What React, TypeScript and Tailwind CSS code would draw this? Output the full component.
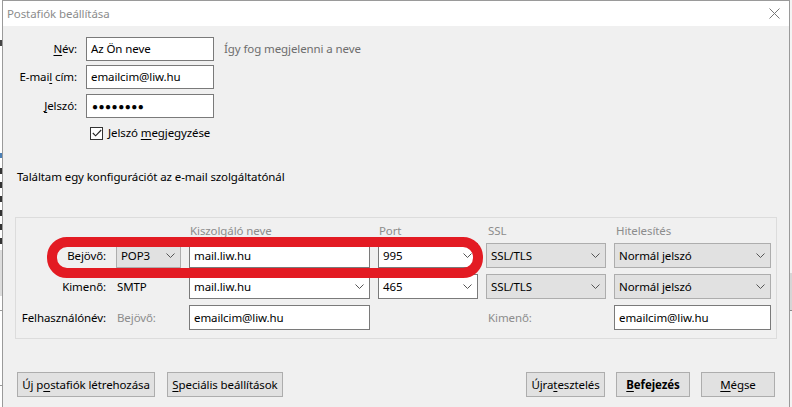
import React from 'react';

const font = "font-['Noto_Sans','Liberation_Sans',sans-serif]";

function Chevron() {
  return (
    <svg width="9" height="5" viewBox="0 0 9 5" className="shrink-0">
      <path d="M0.5 0.5 L4.5 4.5 L8.5 0.5" fill="none" stroke="#555" strokeWidth="1" />
    </svg>
  );
}

function TextBox({ value, className = '' }: { value: string; className?: string }) {
  return (
    <div className={`h-[25px] bg-white border border-[#7a7a7a] flex items-center pl-[4px] text-black ${className}`}>
      {value}
    </div>
  );
}

function EditCombo({ value }: { value: string }) {
  return (
    <div className="h-[25px] bg-white border border-[#7a7a7a] flex items-center justify-between pl-[4px] pr-[5px] text-black">
      <span>{value}</span>
      <Chevron />
    </div>
  );
}

function DropList({ value }: { value: string }) {
  return (
    <div className="h-[25px] bg-[#e1e1e1] border border-[#adadad] flex items-center justify-between pl-[4px] pr-[5px] text-black">
      <span>{value}</span>
      <Chevron />
    </div>
  );
}

function Button({ children, className = '' }: { children: React.ReactNode; className?: string }) {
  return (
    <div className={`h-[25px] bg-[#e1e1e1] border border-[#adadad] flex items-center justify-center text-black ${className}`}>
      {children}
    </div>
  );
}

export default function App() {
  return (
    <div className={`relative w-[792px] h-[407px] bg-white flex overflow-hidden text-[11.5px] tracking-[-0.1px] leading-[16px] ${font}`}>
      {/* background window fragments on the left */}
      <div className="relative w-[2px] h-full bg-white">
        <div className="absolute left-0 top-[40px] w-[2px] h-[6px] bg-[#444]" />
        <div className="absolute left-0 top-[153px] w-[2px] h-[5px] bg-[#4a7fb5]" />
        <div className="absolute left-0 top-[168px] w-[2px] h-[6px] bg-[#333]" />
        <div className="absolute left-0 top-[182px] w-[2px] h-[6px] bg-[#333]" />
        <div className="absolute left-0 top-[196px] w-[2px] h-[6px] bg-[#333]" />
        <div className="absolute left-0 top-[210px] w-[2px] h-[6px] bg-[#333]" />
        <div className="absolute left-0 top-[224px] w-[2px] h-[6px] bg-[#333]" />
        <div className="absolute left-0 top-[238px] w-[2px] h-[6px] bg-[#333]" />
        <div className="absolute left-0 top-[250px] w-[2px] h-[46px] bg-[#dcdcdc]" />
        <div className="absolute left-0 top-[310px] w-[2px] h-[1px] bg-[#999]" />
        <div className="absolute left-0 top-[385px] w-[2px] h-[1px] bg-[#999]" />
      </div>

      {/* dialog window */}
      <div className="w-[788px] h-full flex flex-col border-x border-t border-[#9a9a9a]">
        <div className="h-[25px] bg-white flex items-center justify-between pl-[4px] pr-[9px] shrink-0">
          <span className="text-[#8c8c8c]">Postafiók beállítása</span>
          <svg width="11" height="11" viewBox="0 0 11 11">
            <path d="M0.5 0.5 L10.5 10.5 M10.5 0.5 L0.5 10.5" stroke="#777" strokeWidth="1" />
          </svg>
        </div>

        <div className="flex-1 bg-[#f0f0f0] flex flex-col">
          {/* account fields */}
          <div className="pt-[11px] flex flex-col">
            <div className="flex items-center h-[24px]">
              <div className="w-[74px] text-right text-black"><u className="underline-offset-2">N</u>év:</div>
              <div className="ml-[9px] w-[128px] h-[24px] bg-white border border-[#7a7a7a] flex items-center pl-[4px]">Az Ön neve</div>
              <div className="ml-[10px] text-[#6d6d6d]">Így fog megjelenni a neve</div>
            </div>
            <div className="flex items-center h-[24px] mt-[4px]">
              <div className="w-[74px] text-right text-black">E-mai<u className="underline-offset-2">l</u> cím:</div>
              <div className="ml-[9px] w-[128px] h-[24px] bg-white border border-[#7a7a7a] flex items-center pl-[4px]">emailcim@liw.hu</div>
            </div>
            <div className="flex items-center h-[24px] mt-[5px]">
              <div className="w-[74px] text-right text-black"><u className="underline-offset-2">J</u>elszó:</div>
              <div className="ml-[9px] w-[128px] h-[24px] bg-white border border-[#7a7a7a] flex items-center pl-[5px] text-[10px] tracking-[0.5px]">●●●●●●●●</div>
            </div>
            <div className="flex items-center h-[16px] mt-[7px] ml-[87px]">
              <div className="w-[13px] h-[13px] border border-[#333] bg-white flex items-center justify-center">
                <svg width="10" height="8" viewBox="0 0 10 8">
                  <path d="M0.8 4 L3.6 6.8 L9.2 1" fill="none" stroke="#222" strokeWidth="1.1" />
                </svg>
              </div>
              <span className="ml-[5px] text-black">Jelszó <u className="underline-offset-2">m</u>egjegyzése</span>
            </div>
          </div>

          <div className="mt-[28px] ml-[14px] text-black">Találtam egy konfigurációt az e-mail szolgáltatónál</div>

          {/* server settings group */}
          <div className="mt-[32px] mx-[12px] h-[122px] border border-[#dcdcdc] flex flex-col">
            <div className="grid grid-cols-[92px_65px_181px_100px_120px_157px] gap-x-[8px] gap-y-[6px] items-center">
              <div className="h-[25px]" />
              <div />
              <div className="pl-[1px] text-[#8c8c8c]">Kiszolgáló neve</div>
              <div className="pl-[1px] text-[#8c8c8c]">Port</div>
              <div className="pl-[2px] text-[#8c8c8c]">SSL</div>
              <div className="pl-[2px] text-[#8c8c8c]">Hitelesítés</div>

              <div className="text-right pr-[2px] text-black -mt-[6px]">Bejövő:</div>
              <div className="-mt-[6px]"><DropList value="POP3" /></div>
              <div className="-mt-[6px]"><TextBox value="mail.liw.hu" /></div>
              <div className="-mt-[6px]"><EditCombo value="995" /></div>
              <div className="-mt-[6px]"><DropList value="SSL/TLS" /></div>
              <div className="-mt-[6px]"><DropList value="Normál jelszó" /></div>

              <div className="text-right pr-[2px] text-black">Kimenő:</div>
              <div className="pl-[1px] text-black">SMTP</div>
              <EditCombo value="mail.liw.hu" />
              <EditCombo value="465" />
              <DropList value="SSL/TLS" />
              <DropList value="Normál jelszó" />

              <div className="text-right pr-[2px] text-black">Felhasználónév:</div>
              <div className="pl-[1px] text-[#8c8c8c]">Bejövő:</div>
              <TextBox value="emailcim@liw.hu" />
              <div />
              <div className="pl-[2px] text-[#8c8c8c]">Kimenő:</div>
              <TextBox value="emailcim@liw.hu" />
            </div>
          </div>

          {/* bottom buttons */}
          <div className="mt-auto mb-[10px] px-[14px] flex justify-between">
            <div className="flex gap-[12px]">
              <Button className="w-[138px]">Új p<u className="underline-offset-2">o</u>stafiók létrehozása</Button>
              <Button className="w-[116px]"><u className="underline-offset-2">S</u>peciális beállítások</Button>
            </div>
            <div className="flex gap-[11px]">
              <Button className="w-[79px]">Újra<u className="underline-offset-2">t</u>esztelés</Button>
              <Button className="w-[74px] font-bold"><u className="underline-offset-2">B</u>efejezés</Button>
              <Button className="w-[74px]"><u className="underline-offset-2">M</u>égse</Button>
            </div>
          </div>
        </div>
      </div>

      {/* background on the right */}
      <div className="relative w-[2px] h-full bg-[#f4f4f4]">
        <div className="absolute left-0 top-[273px] w-[2px] h-[37px] bg-[#d6d6d6]" />
        <div className="absolute left-0 top-[310px] w-[2px] h-[1px] bg-[#888]" />
      </div>

      {/* red highlight drawn over the incoming server row */}
      <div className="absolute left-[47px] top-[237px] w-[436px] h-[41px] border-[10px] border-[#e31b23] rounded-[20px] pointer-events-none" />
    </div>
  );
}
